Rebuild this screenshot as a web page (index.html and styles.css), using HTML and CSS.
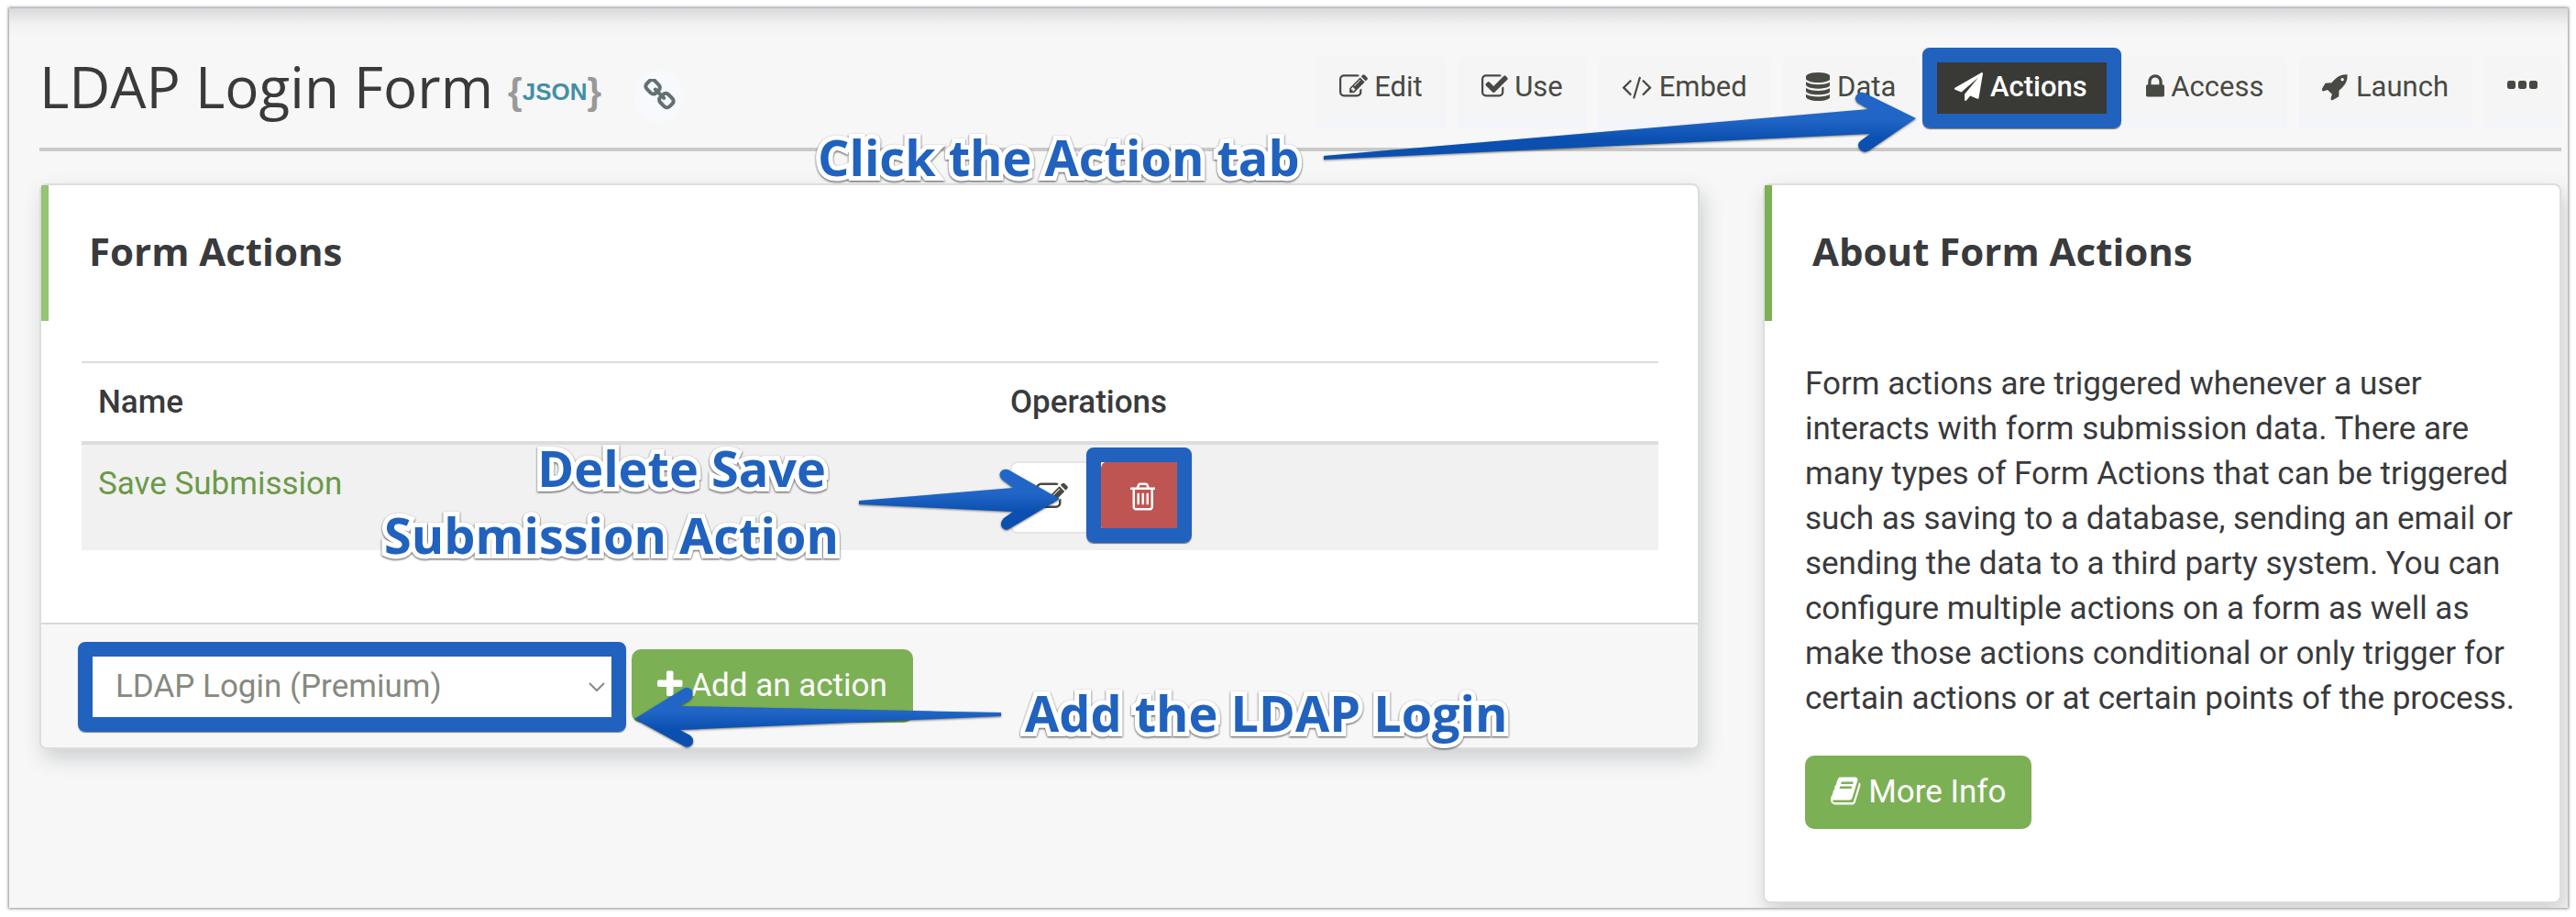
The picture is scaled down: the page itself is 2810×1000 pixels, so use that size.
FILE: index.html
```html
<!DOCTYPE html>
<html lang="en">
<head>
  <meta charset="UTF-8">
  <meta name="viewport" content="width=device-width, initial-scale=1.0">
  <title>LDAP Login Form - Actions</title>
  <link rel="stylesheet" href="styles.css">
</head>
<body>
  <div class="window">
    <header class="page-header">
      <div class="brand">
        <h1>LDAP Login Form</h1>
        <a class="json-link" href="#" aria-label="JSON"><span class="brace">{</span><span>JSON</span><span class="brace">}</span></a>
        <button class="chain-btn" type="button" aria-label="Copy link">
          <svg class="icon" viewBox="64 64 1664 1664"><path d="M1520 1216q0-40-28-68l-208-208q-28-28-68-28-42 0-72 32 3 3 19 18.5t21.5 21.5 15 19 13 25.5 3.5 27.5q0 40-28 68t-68 28q-15 0-27.5-3.5t-25.5-13-19-15-21.5-21.5-18.5-19q-33 31-33 73 0 40 28 68l206 207q27 27 68 27 40 0 68-26l147-146q28-28 28-67zm-703-705q0-40-28-68l-206-207q-28-28-68-28-39 0-68 27l-147 146q-28 28-28 67 0 40 28 68l208 208q27 27 68 27 42 0 72-31-3-3-19-18.5t-21.5-21.5-15-19-13-25.5-3.5-27.5q0-40 28-68t68-28q15 0 27.5 3.5t25.5 13 19 15 21.5 21.5 18.5 19q33-31 33-73zm895 705q0 120-85 203l-147 146q-83 83-203 83-121 0-204-85l-206-207q-83-83-83-203 0-123 88-209l-88-88q-86 88-208 88-120 0-204-84l-208-208q-84-84-84-204t85-203l147-146q83-83 203-83 121 0 204 85l206 207q83 83 83 203 0 123-88 209l88 88q86-88 208-88 120 0 204 84l208 208q84 84 84 204z"/></svg>
        </button>
      </div>

      <nav class="tabs">
        <a class="tab" href="#">
          <svg class="icon" viewBox="0 0 1792 1792"><path d="M888 1184l116-116-152-152-116 116v56h96v96h56zm440-720q-16-16-33 1l-350 350q-17 17-1 33t33-1l350-350q17-17 1-33zm80 594v190q0 119-84.5 203.5t-203.5 84.5h-832q-119 0-203.5-84.5t-84.5-203.5v-832q0-119 84.5-203.5t203.5-84.5h832q63 0 117 25 15 7 18 23 3 17-9 29l-49 49q-14 14-32 8-23-6-45-6h-832q-66 0-113 47t-47 113v832q0 66 47 113t113 47h832q66 0 113-47t47-113v-126q0-13 9-22l64-64q15-15 35-7t20 29zm-96-738l288 288-672 672h-288v-288zm444 132l-92 92-288-288 92-92q28-28 68-28t68 28l152 152q28 28 28 68t-28 68z"/></svg>
          Edit</a>
        <a class="tab" href="#">
          <svg class="icon" viewBox="64 0 1664 1792"><path d="M1472 930v318q0 119-84.5 203.5t-203.5 84.5h-832q-119 0-203.5-84.5t-84.5-203.5v-832q0-119 84.5-203.5t203.5-84.5h832q63 0 117 25 15 7 18 23 3 17-9 29l-49 49q-10 10-23 10-3 0-9-2-23-6-45-6h-832q-66 0-113 47t-47 113v832q0 66 47 113t113 47h832q66 0 113-47t47-113v-254q0-13 9-22l64-64q10-10 23-10 6 0 12 3 20 8 20 29zm231-489l-814 814q-24 24-57 24t-57-24l-430-430q-24-24-24-57t24-57l110-110q24-24 57-24t57 24l263 263 647-647q24-24 57-24t57 24l110 110q24 24 24 57t-24 57z"/></svg>
          Use</a>
        <a class="tab" href="#">
          <svg class="icon" viewBox="-64 0 1920 1792"><path d="M553 1399l-50 50q-10 10-23 10t-23-10l-466-466q-10-10-10-23t10-23l466-466q10-10 23-10t23 10l50 50q10 10 10 23t-10 23l-393 393 393 393q10 10 10 23t-10 23zm591-1067l-373 1291q-4 13-15.5 19.5t-23.5 2.5l-62-17q-13-4-19.5-15.5t-2.5-24.5l373-1291q4-13 15.5-19.5t23.5-2.5l62 17q13 4 19.5 15.5t2.5 24.5zm657 651l-466 466q-10 10-23 10t-23-10l-50-50q-10-10-10-23t10-23l393-393-393-393q-10-10-10-23t10-23l50-50q10-10 23-10t23 10l466 466q10 10 10 23t-10 23z"/></svg>
          Embed</a>
        <a class="tab" href="#">
          <svg class="icon" viewBox="128 0 1536 1792"><path d="M896 768q237 0 443-43t325-127v170q0 69-103 128t-280 93.5-385 34.5-385-34.5-280-93.5-103-128v-170q119 84 325 127t443 43zm0 768q237 0 443-43t325-127v170q0 69-103 128t-280 93.5-385 34.5-385-34.5-280-93.5-103-128v-170q119 84 325 127t443 43zm0-384q237 0 443-43t325-127v170q0 69-103 128t-280 93.5-385 34.5-385-34.5-280-93.5-103-128v-170q119 84 325 127t443 43zm0-1152q208 0 385 34.5t280 93.5 103 128v128q0 69-103 128t-280 93.5-385 34.5-385-34.5-280-93.5-103-128v-128q0-69 103-128t280-93.5 385-34.5z"/></svg>
          Data</a>
        <a class="tab active" href="#" aria-current="page">
          <svg class="icon" viewBox="0 0 1792 1792"><path d="M1764 11q33 24 27 64l-256 1536q-5 29-32 45-14 8-31 8-11 0-24-5l-453-185-242 295q-18 23-49 23-13 0-22-4-19-7-30.5-23.5t-11.5-36.5v-349l864-1059-1069 925-395-162q-37-14-40-55-2-40 32-59l1664-960q15-9 32-9 20 0 36 11z"/></svg>
          Actions</a>
        <a class="tab" href="#">
          <svg class="icon" viewBox="320 0 1152 1792"><path d="M640 768h512v-192q0-106-75-181t-181-75-181 75-75 181v192zm832 96v576q0 40-28 68t-68 28h-960q-40 0-68-28t-28-68v-576q0-40 28-68t68-28h32v-192q0-184 132-316t316-132 316 132 132 316v192h32q40 0 68 28t28 68z"/></svg>
          Access</a>
        <a class="tab" href="#">
          <svg class="icon" viewBox="64 0 1664 1792"><path d="M1440 448q0-40-28-68t-68-28-68 28-28 68 28 68 68 28 68-28 28-68zm224-288q0 249-75.5 430.5t-253.5 360.5q-81 80-195 176l-20 379q-2 16-16 26l-384 224q-7 4-16 4-12 0-23-9l-64-64q-13-14-8-32l85-276-281-281-276 85q-3 1-9 1-14 0-23-9l-64-64q-17-19-5-39l224-384q10-14 26-16l379-20q96-114 176-195 188-187 358-258t431-71q14 0 24 9.5t10 22.5z"/></svg>
          Launch</a>
        <a class="tab more" href="#" aria-label="More">
          <svg class="icon" viewBox="192 0 1408 1792"><path d="M576 736v192q0 40-28 68t-68 28h-192q-40 0-68-28t-28-68v-192q0-40 28-68t68-28h192q40 0 68 28t28 68zm512 0v192q0 40-28 68t-68 28h-192q-40 0-68-28t-28-68v-192q0-40 28-68t68-28h192q40 0 68 28t28 68zm512 0v192q0 40-28 68t-68 28h-192q-40 0-68-28t-28-68v-192q0-40 28-68t68-28h192q40 0 68 28t28 68z"/></svg></a>
      </nav>
    </header>

    <main class="content">
      <section class="card actions-card">
        <h2>Form Actions</h2>
        <div class="card-body">
          <table class="actions-table">
            <thead>
              <tr><th class="col-name">Name</th><th>Operations</th></tr>
            </thead>
            <tbody>
              <tr>
                <td><a href="#">Save Submission</a></td>
                <td>
                  <div class="operations">
                    <button class="op-btn" type="button" aria-label="Edit action">
                      <svg class="icon" viewBox="0 0 1792 1792"><path d="M888 1184l116-116-152-152-116 116v56h96v96h56zm440-720q-16-16-33 1l-350 350q-17 17-1 33t33-1l350-350q17-17 1-33zm80 594v190q0 119-84.5 203.5t-203.5 84.5h-832q-119 0-203.5-84.5t-84.5-203.5v-832q0-119 84.5-203.5t203.5-84.5h832q63 0 117 25 15 7 18 23 3 17-9 29l-49 49q-14 14-32 8-23-6-45-6h-832q-66 0-113 47t-47 113v832q0 66 47 113t113 47h832q66 0 113-47t47-113v-126q0-13 9-22l64-64q15-15 35-7t20 29zm-96-738l288 288-672 672h-288v-288zm444 132l-92 92-288-288 92-92q28-28 68-28t68 28l152 152q28 28 28 68t-28 68z"/></svg>
                    </button>
                    <button class="op-btn delete" type="button" aria-label="Delete action">
                      <svg class="icon" viewBox="192 0 1408 1792"><path d="M704 736v576q0 14-9 23t-23 9h-64q-14 0-23-9t-9-23v-576q0-14 9-23t23-9h64q14 0 23 9t9 23zm256 0v576q0 14-9 23t-23 9h-64q-14 0-23-9t-9-23v-576q0-14 9-23t23-9h64q14 0 23 9t9 23zm256 0v576q0 14-9 23t-23 9h-64q-14 0-23-9t-9-23v-576q0-14 9-23t23-9h64q14 0 23 9t9 23zm128 724v-948h-896v948q0 22 7 40.5t14.5 27 10.5 8.5h832q3 0 10.5-8.5t14.5-27 7-40.5zm-672-1076h448l-48-117q-7-9-17-11h-317q-10 2-17 11zm928 32v64q0 14-9 23t-23 9h-96v948q0 83-47 143.5t-113 60.5h-832q-66 0-113-58.5t-47-141.5v-952h-96q-14 0-23-9t-9-23v-64q0-14 9-23t23-9h309l70-167q15-37 54-63t79-26h320q40 0 79 26t54 63l70 167h309q14 0 23 9t9 23z"/></svg>
                    </button>
                  </div>
                </td>
              </tr>
            </tbody>
          </table>
        </div>
        <div class="card-footer">
          <div class="select-wrap">
            <select id="action-type" aria-label="Action type">
              <option>LDAP Login (Premium)</option>
            </select>
            <svg class="chevron" viewBox="0 0 20 12"><path d="M2 2l8 8 8-8"/></svg>
          </div>
          <button class="btn" type="button">
            <svg class="icon" viewBox="192 0 1408 1792"><path d="M1600 736v192q0 40-28 68t-68 28h-416v416q0 40-28 68t-68 28h-192q-40 0-68-28t-28-68v-416h-416q-40 0-68-28t-28-68v-192q0-40 28-68t68-28h416v-416q0-40 28-68t68-28h192q40 0 68 28t28 68v416h416q40 0 68 28t28 68z"/></svg>
            Add an action</button>
        </div>
      </section>

      <section class="card about-card">
        <h2>About Form Actions</h2>
        <div class="card-body">
          <p>Form actions are triggered whenever a user interacts with form submission data. There are many types of Form Actions that can be triggered such as saving to a database, sending an email or sending the data to a third party system. You can configure multiple actions on a form as well as make those actions conditional or only trigger for certain actions or at certain points of the process.</p>
          <a class="btn" href="#">
            <svg class="icon" viewBox="64 0 1664 1792"><path d="M1703 478q40 57 18 129l-275 906q-19 64-76.5 107.5t-122.5 43.5h-923q-77 0-148.5-53.5t-99.5-131.5q-24-67-2-127 0-4 3-27t4-37q1-8-3-21.5t-3-19.5q2-11 8-21t16.5-23.5 16.5-23.5q23-38 45-91.5t30-91.5q3-10 .5-30t-.5-28q3-11 17-28t17-23q21-36 42-92t25-90q1-9-2.5-32t.5-28q4-13 22-30.5t22-22.5q19-26 42.5-84.5t27.5-96.5q1-8-3-25.5t-2-26.5q2-8 9-18t18-23 17-21q8-12 16.5-30.5t15-35 16-36 19.5-32 26.5-23.5 36-11.5 47.5 5.5l-1 3q38-9 51-9h761q74 0 114 56t18 130l-274 906q-36 119-71.5 153.5t-128.5 34.5h-869q-27 0-38 15-11 16-1 43 24 70 144 70h923q29 0 56-15.5t35-41.5l300-987q7-22 5-57 38 15 59 43zm-1064 2q-4 13 2 22.5t20 9.5h608q13 0 25.5-9.5t16.5-22.5l21-64q4-13-2-22.5t-20-9.5h-608q-13 0-25.5 9.5t-16.5 22.5zm-83 256q-4 13 2 22.5t20 9.5h608q13 0 25.5-9.5t16.5-22.5l21-64q4-13-2-22.5t-20-9.5h-608q-13 0-25.5 9.5t-16.5 22.5z"/></svg>
            More Info</a>
        </div>
      </section>
    </main>
  </div>

  <!-- callouts drawn over the page -->
  <p class="callout callout-tab">Click the Action tab</p>
  <p class="callout callout-delete">Delete Save&nbsp;<br>Submission Action</p>
  <p class="callout callout-add">Add the LDAP Login</p>

  <svg class="arrow arrow-tab" viewBox="1440 90 660 90">
    <defs>
      <linearGradient id="blue" x1="0" y1="0" x2="0" y2="1">
        <stop offset="0.4" stop-color="#2166c6"/>
        <stop offset="0.7" stop-color="#0b50b0"/>
      </linearGradient>
    </defs>
    <path fill="url(#blue)" d="M1444 170L2038 119L2026 112Q2021 106 2027 102Q2031 99 2037 103L2090 129L2039 164Q2033 168 2029 163Q2025 158 2029 154L2040 146L1444 174z"/>
  </svg>
  <svg class="arrow arrow-delete" viewBox="930 500 230 90">
    <path fill="url(#blue)" d="M937 546L1105 532L1093 523Q1088 517 1093 513Q1098 510 1103 514L1156 544L1102 576Q1097 580 1093 575Q1090 570 1095 565L1105 558L937 550z"/>
  </svg>
  <svg class="arrow arrow-add" viewBox="685 740 415 85">
    <path fill="url(#blue)" d="M1092 777L742 770L753 763Q758 757 754 752Q749 748 744 752L692 784L745 813Q750 817 755 812Q758 806 753 802L742 796L1092 781z"/>
  </svg>
</body>
</html>
```
FILE: styles.css
```css
* {
  box-sizing: border-box;
}

body {
  margin: 0;
  position: relative;
  background-color: #fff;
  color: #393a3c;
  font-family: Roboto, sans-serif;
  font-size: 35px;
  line-height: 49px;
}

a {
  color: #6a9a48;
  text-decoration: none;
}

h1, h2, p {
  margin: 0;
}

button {
  font: inherit;
  cursor: pointer;
}

.window {
  margin: 9px 9px 10px 10px;
  padding: 0 7px 5px 33px;
  background: linear-gradient(#d8d9dc, #f2f2f3 18px, #f7f7f7 32px);
  box-shadow: 0 0 3px 1px rgba(0,0,0,0.45);
  overflow: hidden;
}

/* header */
.page-header {
  display: flex;
  justify-content: space-between;
  align-items: flex-start;
  padding: 52px 0 21px;
  border-bottom: 4px solid #c9cac6;
}

.brand {
  display: flex;
  align-items: flex-start;
}

h1 {
  font-family: "Open Sans", sans-serif;
  font-size: 62px;
  font-weight: 400;
  line-height: 66px;
}

.json-link {
  display: flex;
  align-items: center;
  height: 79px;
  margin-left: 16px;
  color: #438fa8;
  font-family: "Liberation Sans", sans-serif;
  font-size: 26px;
  font-weight: bold;
}

.brace {
  color: #999;
  font-size: 40px;
}

.chain-btn {
  width: 54px;
  height: 58px;
  margin: 15px 0 0 36px;
  padding: 0;
  border: none;
  border-radius: 50%;
  background-color: #f8f9fc;
  color: #64706f;
  line-height: 58px;
}

.icon {
  height: 1em;
  fill: currentColor;
  vertical-align: -5px;
}

.tabs {
  display: flex;
  gap: 12px;
  font-size: 31px;
  line-height: 44px;
}

.tab {
  position: relative;
  height: 79px;
  padding: 12px 26px 23px;
  border-radius: 8px 8px 0 0;
  background: linear-gradient(#f5f5f5 67px, #f4f5fa 67px);
  color: #474943;
  white-space: nowrap;
}

.tab.active {
  background: #393a35;
  color: #fff;
  font-weight: 500;
}

.tab.more .icon {
  height: 42px;
  vertical-align: -10px;
}

/* blue frames round the controls in question */
.tab.active::after,
.delete::after,
.select-wrap::after {
  content: "";
  position: absolute;
  border: 16px solid #2162be;
  border-radius: 8px;
  box-shadow: 0 1px 1px rgba(0,0,0,0.5);
  pointer-events: none;
}

.tab.active::after {
  inset: -9px -11px 0 -9px;
}

.delete::after {
  inset: -17px -10px -12px -18px;
}

.select-wrap::after {
  inset: -8px -4px -10px;
}

/* cards */
.content {
  display: grid;
  grid-template-columns: 1811fr 871fr;
  align-items: start;
  gap: 69px;
  margin-top: 35px;
}

.card {
  border: 2px solid #dcdddd;
  border-radius: 8px;
  background-color: #fff;
  box-shadow: 4px 10px 22px rgba(40,50,60,0.2);
}

.card h2 {
  padding: 47px 44px 51px;
  border-left: 8px solid #7cb055;
  font-family: "Open Sans", sans-serif;
  font-size: 42px;
  font-weight: 700;
  line-height: 50px;
}

.actions-card h2 {
  border-left-color: #93c572;
}

.card-body {
  padding: 44px 43px 79px 44px;
}

.about-card p {
  margin-bottom: 38px;
}

.actions-table {
  width: 100%;
  border-collapse: separate;
  border-spacing: 0;
}

.actions-table th,
.actions-table td {
  padding: 18px;
  text-align: left;
  vertical-align: top;
}

.actions-table th {
  border-top: 2px solid #dcdddd;
  border-bottom: 4px solid #dcdddd;
  font-weight: 500;
}

.actions-table .col-name {
  width: 995px;
}

.actions-table td {
  background-color: #f1f1f1;
}

.operations {
  display: flex;
  gap: 8px;
}

.op-btn {
  position: relative;
  width: 91px;
  height: 79px;
  padding: 0;
  border: 2px solid #e6e6e6;
  border-radius: 8px;
  background-color: #fff;
  color: #474943;
}

.op-btn.delete {
  border-color: #bf5553;
  background-color: #bf5553;
  color: #fff;
}

.card-footer {
  display: flex;
  gap: 10px;
  padding: 27px 43px 27px 44px;
  border-top: 2px solid #d8d9d8;
  border-radius: 0 0 8px 8px;
  background-color: #f7f7f7;
}

.select-wrap {
  position: relative;
  width: 590px;
}

.select-wrap select {
  appearance: none;
  width: 100%;
  height: 80px;
  padding: 0 37px;
  border: none;
  background-color: #fff;
  color: #868a80;
  font: inherit;
}

.chevron {
  position: absolute;
  right: 18px;
  top: 35px;
  width: 20px;
  fill: none;
  stroke: #868a80;
  stroke-width: 2;
}

.btn {
  display: inline-block;
  height: 80px;
  padding: 15px 28px 16px;
  border: none;
  border-radius: 10px;
  background-color: #7cb055;
  color: #fff;
}

/* callouts */
.callout {
  position: absolute;
  color: #2162be;
  font-family: "Open Sans", sans-serif;
  font-size: 54px;
  font-weight: 700;
  line-height: 73px;
  text-align: right;
  white-space: nowrap;
  -webkit-text-stroke: 10px #fff;
  paint-order: stroke fill;
  filter: drop-shadow(0 1px 1px rgba(0,0,0,0.7));
}

.callout-tab {
  top: 135px;
  left: 892px;
}

.callout-delete {
  top: 474px;
  left: 419px;
}

.callout-add {
  top: 741px;
  left: 1118px;
}

.arrow {
  position: absolute;
  pointer-events: none;
  filter: drop-shadow(0 1px 1px rgba(0,0,0,0.5));
}

.arrow-tab {
  top: 90px;
  left: 1440px;
  width: 660px;
}

.arrow-delete {
  top: 500px;
  left: 930px;
  width: 230px;
}

.arrow-add {
  top: 740px;
  left: 685px;
  width: 415px;
}
```
